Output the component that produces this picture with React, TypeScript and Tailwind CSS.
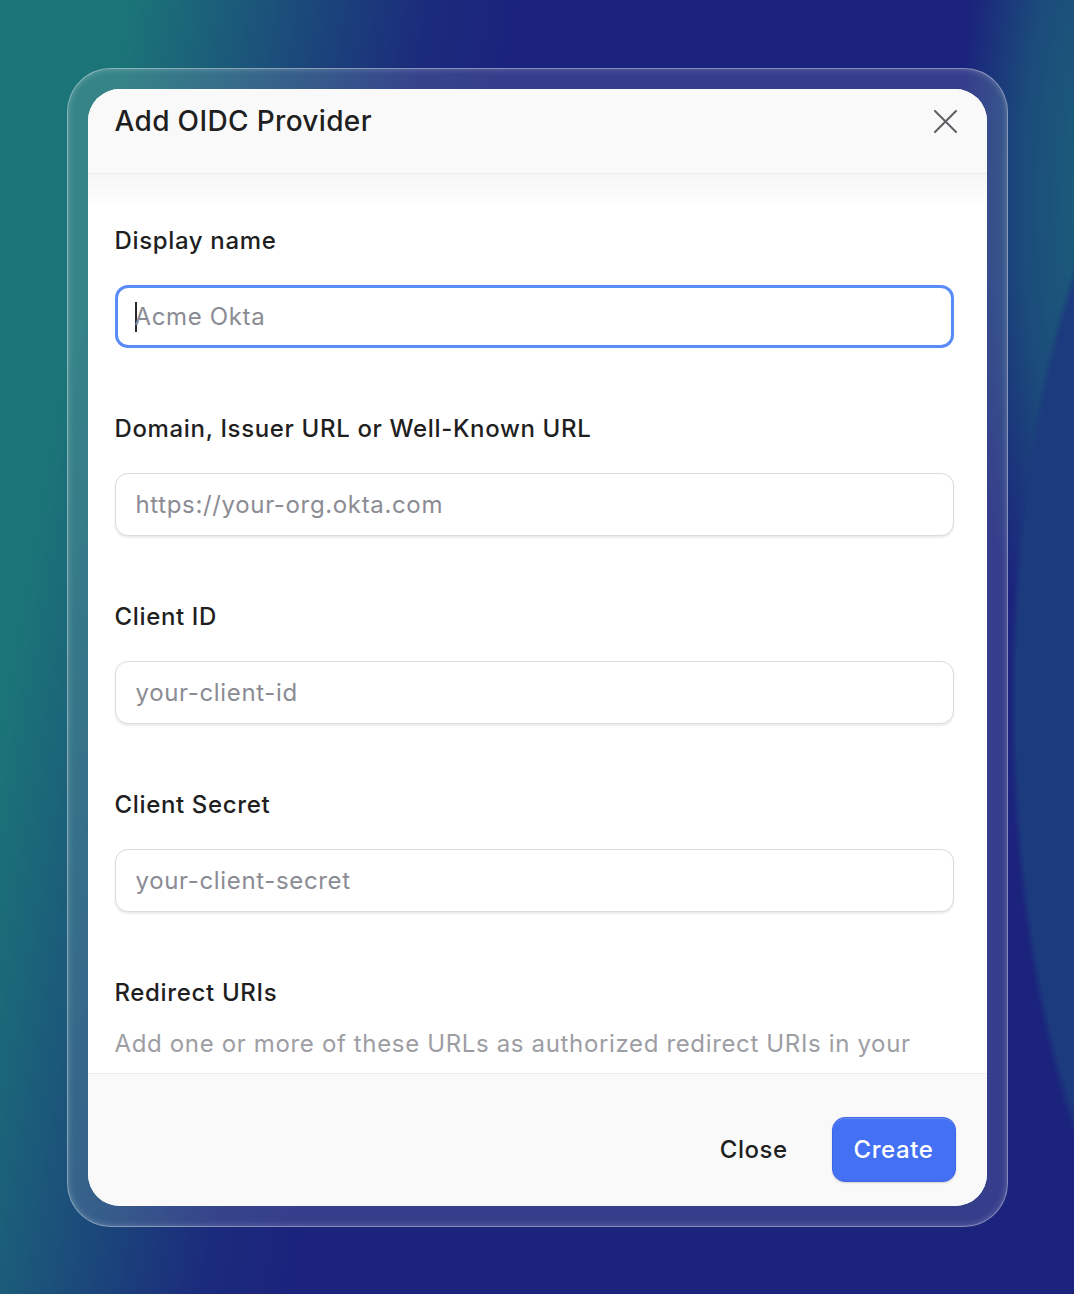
import React from 'react';

interface FieldProps {
  label: string;
  placeholder: string;
  focused?: boolean;
}

const Field: React.FC<FieldProps> = ({ label, placeholder, focused = false }) => (
  <div className="flex flex-col">
    <label className="text-[24px] leading-[32px] font-medium tracking-[0.65px] text-[#1f1f1f]">{label}</label>
    <div
      className={
        focused
          ? 'mt-[28px] h-[63px] rounded-[13px] border-[3px] border-[#5a8cf8] bg-white flex items-center pl-[17px]'
          : 'mt-[28px] h-[63px] rounded-[13px] border border-[#dcdcdf] bg-white shadow-[0_1.5px_2px_rgba(0,0,0,0.08)] flex items-center pl-[20px]'
      }
    >
      {focused && <span className="w-[2px] h-[30px] bg-[#2a2a2a] -mr-[2px]" />}
      <input
        className="flex-1 bg-transparent outline-none text-[24px] tracking-[0.65px] text-[#222] placeholder:text-[#8b8b94]"
        placeholder={placeholder}
      />
    </div>
  </div>
);

export default function App() {
  return (
    <div
      className="w-[1074px] h-[1294px] flex items-start justify-center pt-[68px] font-['Inter','Liberation_Sans',sans-serif] bg-[radial-gradient(ellipse_220px_620px_at_1230px_700px,#1c3b7e_0%,#1c3a7e_97%,transparent_100%),radial-gradient(ellipse_140px_520px_at_1100px_200px,#1b627a_0%,rgba(27,90,122,0.75)_55%,transparent_100%),linear-gradient(100deg,#1b7478_0%,#1b7478_10%,#1b4e7a_22%,#1b2b7c_33%,#1b237c_40%,#1b237c_100%)]"
    >
      {/* Glass frame */}
      <div className="w-[941px] h-[1159px] rounded-[44px] p-[20px] bg-white/[0.12] border-[1.5px] border-white/40 shadow-[inset_0_0_6px_rgba(255,255,255,0.25)]">
        <div className="w-full h-full rounded-[32px] bg-white overflow-hidden flex flex-col">
          {/* Header */}
          <div className="h-[85px] shrink-0 bg-[#f9f9f9] border-b border-[#ececec] flex items-center justify-between pl-[27px] pr-[29px] pb-[20px]">
            <h2 className="text-[28px] font-medium text-[#1f1f1f] tracking-[0.35px]">Add OIDC Provider</h2>
            <button className="w-[24px] h-[24px] flex items-center justify-center">
              <svg width="23" height="23" viewBox="0 0 23 23" fill="none">
                <path d="M1 1L22 22M22 1L1 22" stroke="#5f5f63" strokeWidth="2" strokeLinecap="round" />
              </svg>
            </button>
          </div>

          {/* Body */}
          <div className="flex-1 overflow-hidden bg-[linear-gradient(to_bottom,#f6f6f6_0px,#ffffff_34px)] pl-[27px] pr-[33px] pt-[51px]">
            <div className="flex flex-col gap-[65px]">
              <Field label="Display name" placeholder="Acme Okta" focused />
              <Field label="Domain, Issuer URL or Well-Known URL" placeholder="https://your-org.okta.com" />
              <Field label="Client ID" placeholder="your-client-id" />
              <Field label="Client Secret" placeholder="your-client-secret" />
              <div className="flex flex-col">
                <h3 className="text-[24px] leading-[32px] font-medium tracking-[0.65px] text-[#1f1f1f]">Redirect URIs</h3>
                <p className="mt-[19px] text-[24px] leading-[32px] tracking-[0.65px] text-[#9d9da4] whitespace-nowrap">
                  Add one or more of these URLs as authorized redirect URIs in your
                </p>
              </div>
            </div>
          </div>

          {/* Footer */}
          <div className="h-[133px] shrink-0 bg-[#f9f9f9] border-t border-[#ededed] flex items-start justify-end gap-[20px] pt-[43px] pr-[31px]">
            <button className="h-[65px] px-[24px] text-[24px] font-medium tracking-[0.5px] text-[#1f1f1f]">Close</button>
            <button className="h-[65px] w-[124px] rounded-[13px] bg-[#4470f4] border border-[#3f66e6] shadow-[inset_0_1px_0_rgba(255,255,255,0.2),0_1px_2px_rgba(0,0,0,0.15)] text-[24px] font-medium tracking-[0.6px] text-white">
              Create
            </button>
          </div>
        </div>
      </div>
    </div>
  );
}
